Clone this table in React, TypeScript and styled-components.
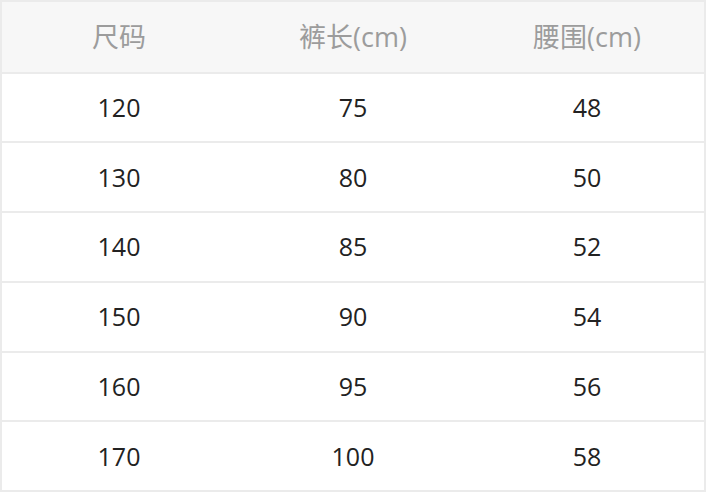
import styled, { createGlobalStyle } from 'styled-components';

const GlobalStyle = createGlobalStyle`
  html, body {
    margin: 0;
    padding: 0;
    background: #ffffff;
  }
  body {
    font-family: "Open Sans", "Noto Sans CJK SC", sans-serif;
  }
`;

type SizeRow = {
  size: number;
  length: number;
  waist: number;
};

const rows: SizeRow[] = [
  { size: 120, length: 75, waist: 48 },
  { size: 130, length: 80, waist: 50 },
  { size: 140, length: 85, waist: 52 },
  { size: 150, length: 90, waist: 54 },
  { size: 160, length: 95, waist: 56 },
  { size: 170, length: 100, waist: 58 },
];

const headers = ['尺码', '裤长(cm)', '腰围(cm)'];

export default function App() {
  return (
    <>
      <GlobalStyle />
      <Table>
        <Row $head>
          {headers.map((h) => (
            <HeadCell key={h}>{h}</HeadCell>
          ))}
        </Row>
        {rows.map((r) => (
          <Row key={r.size}>
            <Cell>{r.size}</Cell>
            <Cell>{r.length}</Cell>
            <Cell>{r.waist}</Cell>
          </Row>
        ))}
      </Table>
    </>
  );
}

const Table = styled.div`
  width: 706px;
  height: 492px;
  box-sizing: border-box;
  border: 2px solid #ebebeb;
  display: grid;
  grid-template-rows: repeat(7, 1fr);
  background: #ffffff;
`;

const Row = styled.div<{ $head?: boolean }>`
  display: grid;
  grid-template-columns: repeat(3, 1fr);
  align-items: center;
  background: ${({ $head }) => ($head ? '#f7f7f7' : '#ffffff')};
  border-top: 2px solid #ebebeb;

  &:first-child {
    border-top: none;
  }
`;

const Cell = styled.div`
  text-align: center;
  font-size: 25px;
  color: #222222;
  line-height: 1;
`;

const HeadCell = styled(Cell)`
  color: #9c9c9c;
  font-size: 27px;
`;
